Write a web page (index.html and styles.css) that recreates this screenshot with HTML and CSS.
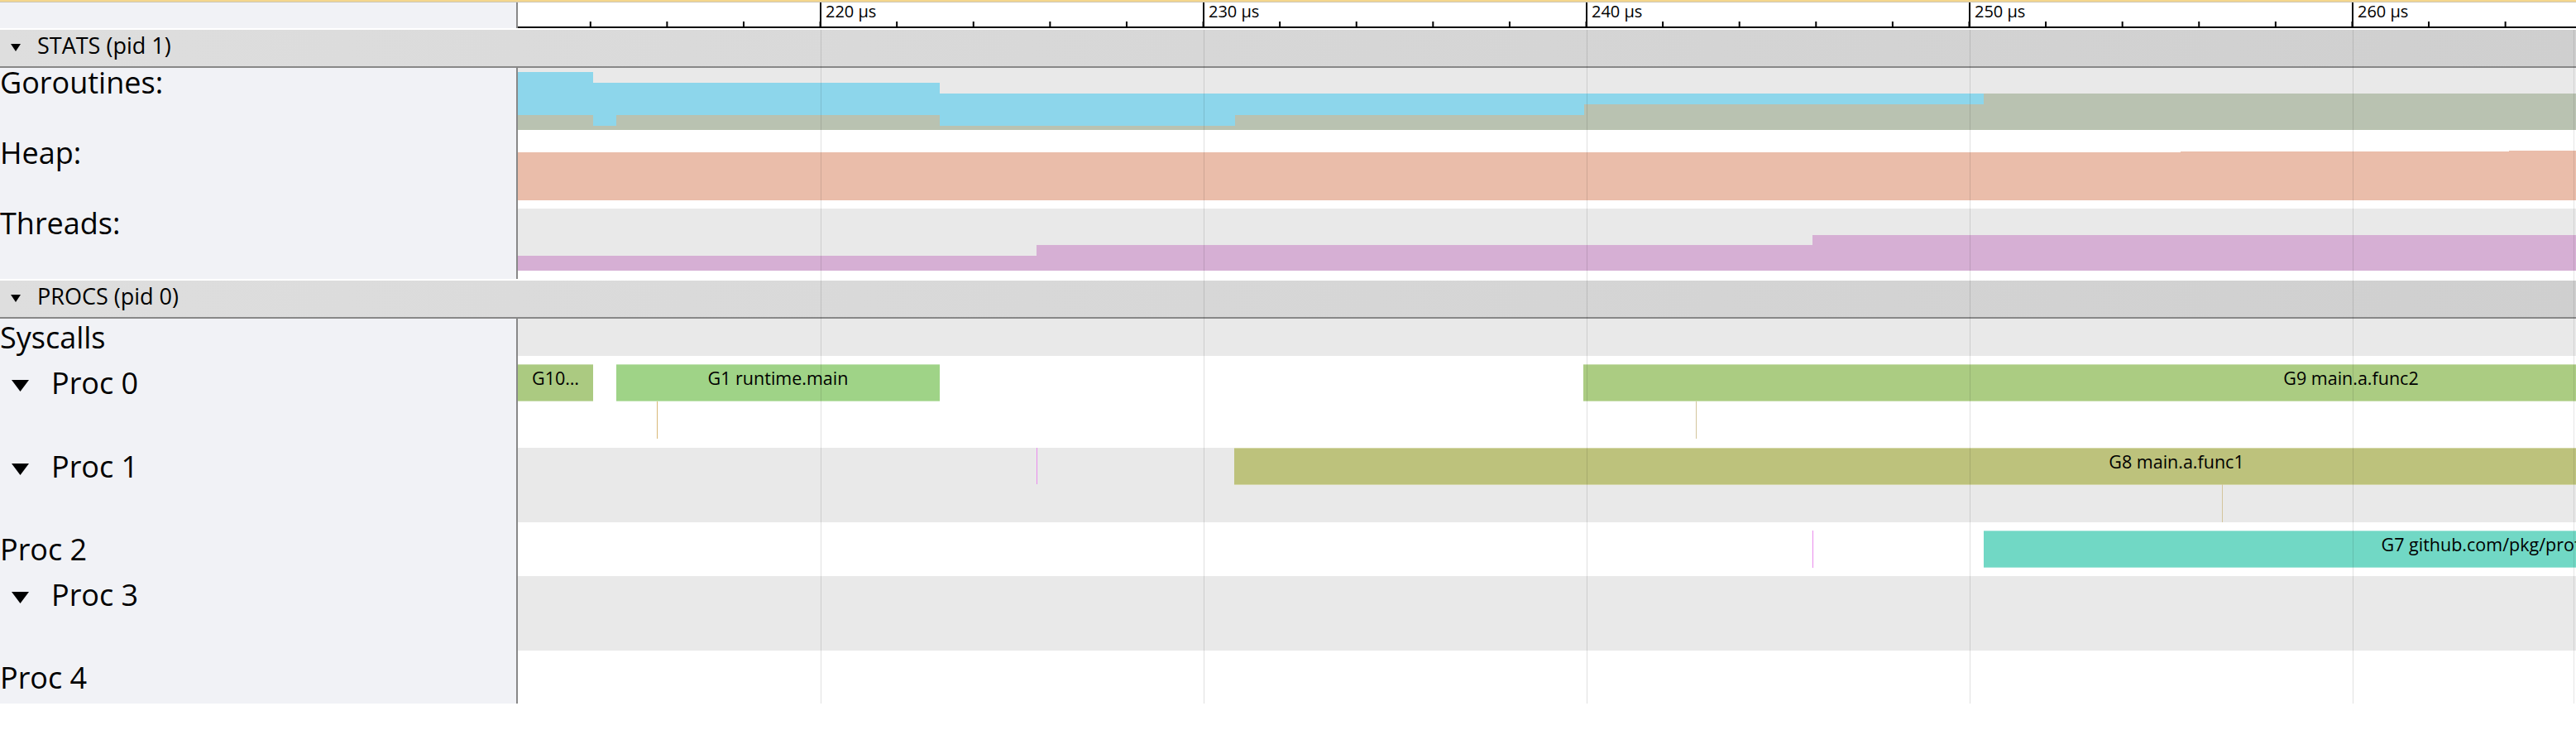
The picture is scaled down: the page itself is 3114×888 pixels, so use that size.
FILE: index.html
```html
<!DOCTYPE html>
<html>
<head>
<meta charset="utf-8">
<title>Trace viewer</title>
<link rel="stylesheet" href="styles.css">
</head>
<body>
<div class="app">
  <div class="topline"></div>
  <div class="ruler-row">
    <div class="ruler-left"></div>
    <div class="ruler">
      <div class="major"><span>220 µs</span></div>
      <div class="major"><span>230 µs</span></div>
      <div class="major"><span>240 µs</span></div>
      <div class="major"><span>250 µs</span></div>
      <div class="major last"><span>260 µs</span></div>
    </div>
  </div>

  <div class="tracks">
    <div class="group-header">
      <svg class="tri-sm" viewBox="0 0 12 9" width="12" height="9"><polygon points="0,0 12,0 6,9"/></svg>
      <span class="group-title">STATS (pid 1)</span>
    </div>

    <div class="row counter">
      <div class="label"><span class="counter-label">Goroutines:</span></div>
      <div class="track">
        <div class="chart alt">
          <svg viewBox="0 0 2488 75" preserveAspectRatio="none">
            <polygon class="c-blue" points="0,5 91,5 91,18 510,18 510,31 2488,31 2488,75 0,75"/>
            <polygon class="c-grey" points="0,57 91,57 91,70 119,70 119,57 510,57 510,70 867,70 867,57 1289,57 1289,44 1772,44 1772,31 2488,31 2488,75 0,75"/>
          </svg>
        </div>
      </div>
    </div>

    <div class="row counter">
      <div class="label"><span class="counter-label">Heap:</span></div>
      <div class="track">
        <div class="chart">
          <svg viewBox="0 0 2488 75" preserveAspectRatio="none">
            <polygon class="c-heap" points="0,17 2010,17 2010,16 2407,16 2407,15 2488,15 2488,75 0,75"/>
          </svg>
        </div>
      </div>
    </div>

    <div class="row counter">
      <div class="label"><span class="counter-label">Threads:</span></div>
      <div class="track">
        <div class="chart alt">
          <svg viewBox="0 0 2488 75" preserveAspectRatio="none">
            <polygon class="c-threads" points="0,57 627,57 627,44 1565,44 1565,32 2488,32 2488,75 0,75"/>
          </svg>
        </div>
      </div>
    </div>

    <div class="group-header">
      <svg class="tri-sm" viewBox="0 0 12 9" width="12" height="9"><polygon points="0,0 12,0 6,9"/></svg>
      <span class="group-title">PROCS (pid 0)</span>
    </div>

    <div class="row proc h45">
      <div class="label"><div class="lane-label">Syscalls</div></div>
      <div class="track alt"></div>
    </div>

    <div class="row proc h111 pad">
      <div class="label"><div class="lane-label"><svg class="tri" viewBox="0 0 21 14" width="21" height="14"><polygon points="0,0 21,0 10.5,14"/></svg>Proc 0</div></div>
      <div class="track">
        <div class="lane">
          <div class="slice s-g10" style="left:0;width:91px">G10…</div>
          <div class="slice s-g1" style="left:119px;width:391px">G1 runtime.main</div>
          <div class="slice s-g9" style="left:1288px;width:1856px">G9 main.a.func2</div>
        </div>
        <div class="mark m-tan" style="left:168px;top:55px;height:45px"></div>
        <div class="mark m-tan2" style="left:1424px;top:55px;height:45px"></div>
      </div>
    </div>

    <div class="row proc h90">
      <div class="label"><div class="lane-label"><svg class="tri" viewBox="0 0 21 14" width="21" height="14"><polygon points="0,0 21,0 10.5,14"/></svg>Proc 1</div></div>
      <div class="track alt">
        <div class="lane">
          <div class="slice s-g8" style="left:866px;width:2278px">G8 main.a.func1</div>
        </div>
        <div class="mark m-pink" style="left:627px;top:0;height:44px"></div>
        <div class="mark m-tan2" style="left:2060px;top:44px;height:46px"></div>
      </div>
    </div>

    <div class="row proc h65 pad">
      <div class="label"><div class="lane-label">Proc 2</div></div>
      <div class="track">
        <div class="lane">
          <div class="slice s-g7" style="left:1772px;width:1340px">G7 github.com/pkg/profile.Start.func1</div>
        </div>
        <div class="mark m-pink" style="left:1565px;top:10px;height:45px"></div>
      </div>
    </div>

    <div class="row proc h90">
      <div class="label"><div class="lane-label"><svg class="tri" viewBox="0 0 21 14" width="21" height="14"><polygon points="0,0 21,0 10.5,14"/></svg>Proc 3</div></div>
      <div class="track alt"></div>
    </div>

    <div class="row proc h64 pad">
      <div class="label"><div class="lane-label">Proc 4</div></div>
      <div class="track"></div>
    </div>

    <div class="grid"></div>
  </div>
</div>
</body>
</html>
```

FILE: styles.css
```css
html, body {
  margin: 0;
  padding: 0;
  background: #ffffff;
}

body {
  font-family: "Open Sans", "Noto Sans", sans-serif;
  color: #000;
  width: 3114px;
  overflow: hidden;
}

.app {
  display: flex;
  flex-direction: column;
}

.topline {
  height: 2px;
  background: #f4d68d;
  border-bottom: 1px solid #cbc6b8;
}

/* ---------- ruler ---------- */
.ruler-row {
  display: flex;
  height: 31px;
}

.ruler-left {
  width: 626px;
  box-sizing: border-box;
  flex: 0 0 626px;
  background: #f1f2f6;
  border-right: 2px solid #888;
}

.ruler {
  flex: 1;
  min-width: 0;
  height: 29px;
  border-bottom: 2px solid #000;
  background-color: #fff;
  background-image: linear-gradient(to right, #000 0 2px, transparent 2px);
  background-size: 92.6px 6px;
  background-repeat: repeat-x;
  background-position: 86.8px bottom;
  display: flex;
  padding-left: 365px;
}

.major {
  flex: 0 0 463px;
  box-sizing: border-box;
  border-left: 2px solid #000;
  padding-left: 5px;
  padding-top: 1px;
  font-size: 20px;
  line-height: 20px;
  white-space: nowrap;
}

.major.last {
  flex: 1 1 0;
  min-width: 0;
}

/* ---------- tracks ---------- */
.tracks {
  position: relative;
  display: flex;
  flex-direction: column;
}

.group-header {
  height: 44px;
  border-top: 2px solid #fff;
  border-bottom: 2px solid #888;
  background: linear-gradient(to right, #dedede, #cfcfcf);
  display: flex;
  align-items: flex-start;
}

.tri-sm {
  display: block;
  margin: 17px 20px 0 13px;
  fill: #000;
}

.group-title {
  margin-top: 5px;
  font-size: 27px;
  line-height: 28px;
  white-space: nowrap;
}

.row {
  display: flex;
}

.label {
  flex: 0 0 626px;
  width: 626px;
  box-sizing: border-box;
  background: #f1f2f6;
  border-right: 2px solid #888;
  white-space: nowrap;
}

.track {
  flex: 1;
  min-width: 0;
  position: relative;
  overflow: hidden;
  background: #fff;
}

.track.alt {
  background: #e9e9e9;
}

/* counter tracks */
.counter {
  height: 85px;
}

.counter-label {
  display: block;
  font-size: 36px;
  line-height: 36px;
}

.chart {
  height: 75px;
  background: #fff;
}

.chart.alt {
  background: #e9e9e9;
}

.chart svg {
  display: block;
  width: 100%;
  height: 75px;
}

.c-blue { fill: #8dd6eb; }
.c-grey { fill: #b9c2b1; }
.c-heap { fill: #eabdaa; }
.c-threads { fill: #d6afd4; }

/* proc tracks */
.h45 { height: 45px; }
.h111 { height: 111px; }
.h90 { height: 90px; }
.h65 { height: 65px; }
.h64 { height: 64px; }

.pad .label,
.pad .track {
  padding-top: 10px;
}

.pad .track {
  box-sizing: border-box;
}

.lane-label {
  height: 45px;
  display: flex;
  align-items: center;
  font-size: 36px;
  line-height: 45px;
}

.tri {
  display: block;
  align-self: flex-start;
  margin: 19px 27px 0 14px;
  fill: #000;
}

.lane {
  position: relative;
  height: 45px;
}

.slice {
  position: absolute;
  top: 0;
  height: 45px;
  box-sizing: border-box;
  display: flex;
  justify-content: center;
  align-items: flex-start;
  padding-top: 6px;
  font-size: 21.5px;
  line-height: 21.5px;
  white-space: nowrap;
  overflow: hidden;
  box-shadow: inset 0 1px rgba(255, 255, 255, 0.35), inset 0 -1px rgba(255, 255, 255, 0.35);
}

.s-g10 { background: #abca81; }
.s-g1 { background: #9fd387; }
.s-g9 { background: #abcc82; }
.s-g8 { background: #bdc27c; }
.s-g7 { background: #71d8c5; }

.mark {
  position: absolute;
  width: 1px;
}

.m-tan { background: #d9b878; }
.m-tan2 { background: #d3c59c; }
.m-pink { background: #e98ced; }

/* vertical grid lines over the timeline */
.grid {
  position: absolute;
  top: 2px;
  bottom: 0;
  left: 626px;
  right: 2px;
  pointer-events: none;
  background-image: linear-gradient(to right, rgba(0, 0, 0, 0.12) 0 1px, transparent 1px);
  background-size: 463px 100%;
  background-repeat: repeat-x;
  background-position: 366px 0;
  border-right: 1px solid rgba(0, 0, 0, 0.1);
}
```
